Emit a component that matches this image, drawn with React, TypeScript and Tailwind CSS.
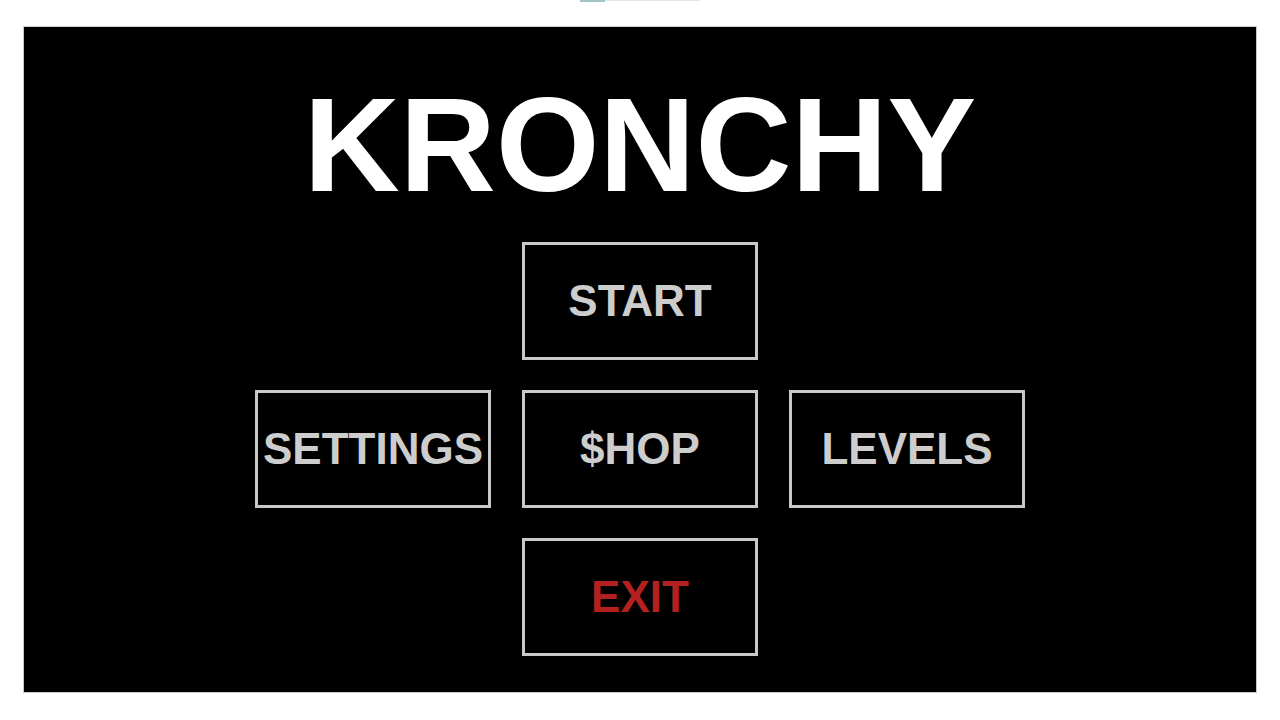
const font = { fontFamily: '"Liberation Sans", Arial, sans-serif' };

function MenuButton({ label, red }: { label: string; red?: boolean }) {
  return (
    <button
      className={`flex h-[118px] w-[236px] items-center justify-center border-[3px] border-[#c9c9c9] bg-black text-[44px] font-bold leading-none ${
        red ? "text-[#b3201f]" : "text-[#cdcdcd]"
      }`}
    >
      {label}
    </button>
  );
}

export default function App() {
  return (
    <div className="h-[720px] w-[1280px] overflow-hidden bg-white" style={font}>
      {/* faint strip at the very top */}
      <div className="flex h-[2px]">
        <div className="ml-[580px] h-[2px] w-[25px] bg-[#9fc4c4]" />
        <div className="h-[1px] w-[95px] bg-[#e4e4e4]" />
      </div>

      <div className="ml-[23px] mt-[24px] h-[667px] w-[1234px] border border-[#c8c8c8] bg-black">
        <div className="flex flex-col items-center pt-[52px]">
          <h1 className="text-[133px] font-bold leading-none text-white">KRONCHY</h1>

          <div className="mt-[30px] grid grid-cols-[236px_236px_236px] grid-rows-[118px_118px_118px] gap-x-[31px] gap-y-[30px]">
            <div />
            <MenuButton label="START" />
            <div />
            <MenuButton label="SETTINGS" />
            <MenuButton label="$HOP" />
            <MenuButton label="LEVELS" />
            <div />
            <MenuButton label="EXIT" red />
            <div />
          </div>
        </div>
      </div>
    </div>
  );
}
